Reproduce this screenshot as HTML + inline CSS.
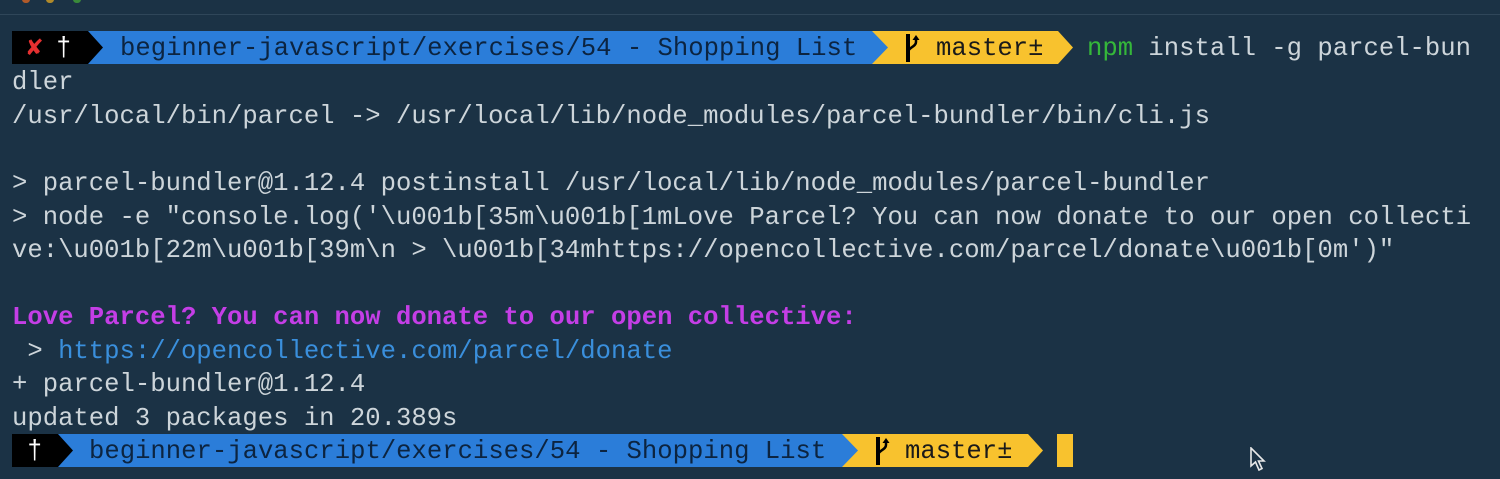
<!DOCTYPE html>
<html><head><meta charset="utf-8"><style>
body{margin:0;width:1500px;height:479px;background:#1b3245;overflow:hidden;position:relative;font-family:"Liberation Mono","DejaVu Sans Mono",monospace;}
.r{position:absolute;left:12px;height:34px;line-height:34px;font-size:25.6px;color:#cdd5da;white-space:pre;}
.m{color:#c43ee6;font-weight:bold}
.u{color:#3a8fdc}
.g{color:#35b83a}
.seg{position:absolute;height:33px}
.pt{position:absolute;font-size:25.6px;line-height:35px;color:#0c2440;white-space:pre}
</style></head><body>
<div style="position:absolute;left:0;top:14px;width:1500px;height:1px;background:#2f4659"></div>
<div style="position:absolute;left:22px;top:-4px;width:8px;height:7px;border-radius:4px;background:#b05a2a"></div>
<div style="position:absolute;left:46px;top:-4px;width:8px;height:7px;border-radius:4px;background:#b08a2a"></div>
<div style="position:absolute;left:73px;top:-4px;width:8px;height:7px;border-radius:4px;background:#3a8a3a"></div>

<!-- prompt 1 -->
<div class="seg" style="top:31px;left:872px;width:201px;background:#f8c22e;clip-path:polygon(0 0,186px 0,201px 50%,186px 100%,0 100%)"></div>
<div class="seg" style="top:31px;left:88px;width:800px;background:#2b7dd9;clip-path:polygon(0 0,784px 0,800px 50%,784px 100%,0 100%)"></div>
<div class="seg" style="top:31px;left:12px;width:91px;background:#000;clip-path:polygon(0 0,76px 0,91px 50%,76px 100%,0 100%)"></div>
<div class="pt" style="top:31px;left:27px;color:#e53030;font-weight:bold">✘</div>
<div class="pt" style="top:31px;left:56px;color:#fff">†</div>
<div class="pt" style="top:31px;left:120px">beginner-javascript/exercises/54 - Shopping List</div>
<svg style="position:absolute;left:902px;top:33px" width="20" height="30" viewBox="0 0 20 30"><path d="M6 1 V29" stroke="#000" stroke-width="4"/><path d="M6 20 C6 14 14 14 14 9 V5" stroke="#000" stroke-width="2.5" fill="none"/><path d="M10.5 7 L14 2 L17.5 7 Z" fill="#000"/></svg>
<div class="pt" style="top:31px;left:936px;color:#1a1a1a">master±</div>
<div class="r" style="top:32px;left:1087px"><span class="g">npm</span> install -g parcel-bun</div>

<div class="r" style="top:66px">dler</div>
<div class="r" style="top:100px">/usr/local/bin/parcel -&gt; /usr/local/lib/node_modules/parcel-bundler/bin/cli.js</div>
<div class="r" style="top:167px">&gt; parcel-bundler@1.12.4 postinstall /usr/local/lib/node_modules/parcel-bundler</div>
<div class="r" style="top:201px">&gt; node -e "console.log('\u001b[35m\u001b[1mLove Parcel? You can now donate to our open collecti</div>
<div class="r" style="top:234px">ve:\u001b[22m\u001b[39m\n &gt; \u001b[34mhttps://opencollective.com/parcel/donate\u001b[0m')"</div>
<div class="r m" style="top:301px">Love Parcel? You can now donate to our open collective:</div>
<div class="r" style="top:335px"> &gt; <span class="u">https://opencollective.com/parcel/donate</span></div>
<div class="r" style="top:368px">+ parcel-bundler@1.12.4</div>
<div class="r" style="top:402px">updated 3 packages in 20.389s</div>

<!-- prompt 2 -->
<div class="seg" style="top:434px;left:842px;width:201px;background:#f8c22e;clip-path:polygon(0 0,186px 0,201px 50%,186px 100%,0 100%)"></div>
<div class="seg" style="top:434px;left:58px;width:800px;background:#2b7dd9;clip-path:polygon(0 0,784px 0,800px 50%,784px 100%,0 100%)"></div>
<div class="seg" style="top:434px;left:12px;width:61px;background:#000;clip-path:polygon(0 0,46px 0,61px 50%,46px 100%,0 100%)"></div>
<div class="pt" style="top:434px;left:27px;color:#fff">†</div>
<div class="pt" style="top:434px;left:89px">beginner-javascript/exercises/54 - Shopping List</div>
<svg style="position:absolute;left:872px;top:436px" width="20" height="30" viewBox="0 0 20 30"><path d="M6 1 V29" stroke="#000" stroke-width="4"/><path d="M6 20 C6 14 14 14 14 9 V5" stroke="#000" stroke-width="2.5" fill="none"/><path d="M10.5 7 L14 2 L17.5 7 Z" fill="#000"/></svg>
<div class="pt" style="top:434px;left:905px;color:#1a1a1a">master±</div>
<div style="position:absolute;left:1057px;top:434px;width:16px;height:33px;background:#f8c22e"></div>

<svg style="position:absolute;left:1250px;top:447px" width="20" height="26" viewBox="0 0 20 26"><path d="M1 1 L1 19 L5.5 15 L9 23 L12 21.5 L8.5 14 L14 14 Z" fill="#1b3245" stroke="#e8e8e8" stroke-width="1.6"/></svg>
</body></html>
